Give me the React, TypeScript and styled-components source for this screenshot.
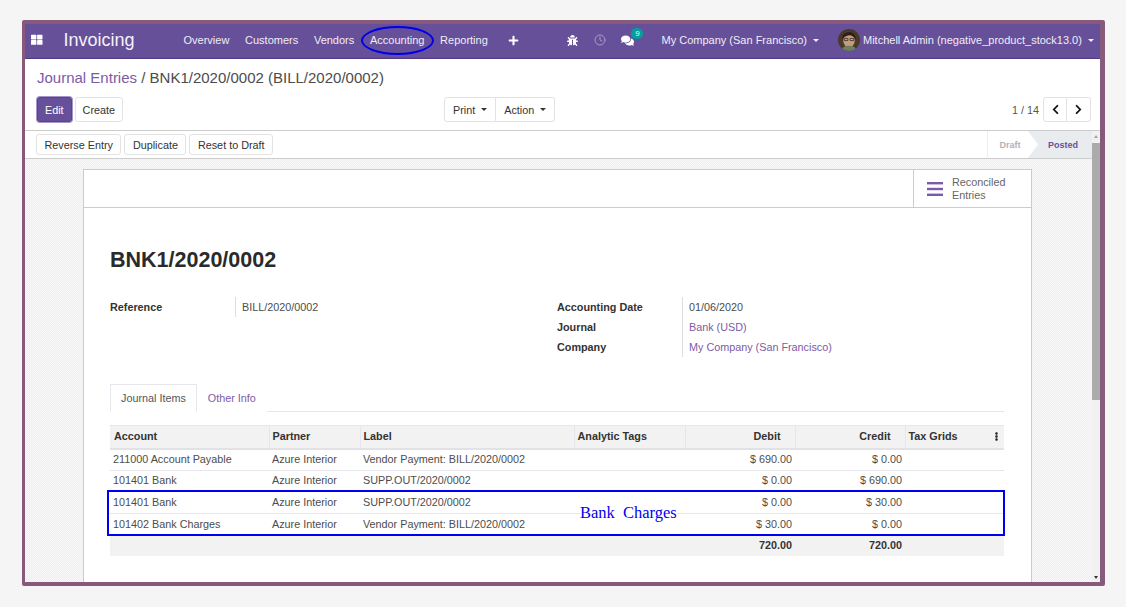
import React from 'react';
import styled, { createGlobalStyle } from 'styled-components';
import { FaBug, FaChevronLeft, FaChevronRight, FaComments, FaEllipsisV, FaPlus, FaThLarge } from 'react-icons/fa';
import { FiClock } from 'react-icons/fi';

const GlobalStyle = createGlobalStyle`
  html, body {
    margin: 0;
    padding: 0;
    height: 100%;
    background: #f5f5f5;
    overflow: hidden;
  }
  body {
    font-family: 'Liberation Sans', Arial, sans-serif;
    font-size: 10.8px;
    color: #4c4c4c;
  }
`;

const Page = styled.div`
  padding: 20px 21px 0 22px;
`;

const Frame = styled.div`
  width: 1083px;
  height: 566px;
  box-sizing: border-box;
  border: 3px solid #875a7b;
  border-top-width: 4px;
  border-right-width: 5px;
  border-bottom-width: 4px;
  border-radius: 2px;
  background: #fff;
  display: flex;
  flex-direction: column;
  overflow: hidden;
`;

const Navbar = styled.nav`
  height: 35px;
  flex: none;
  box-sizing: border-box;
  background: #67509a;
  border-bottom: 1px solid #4f3a86;
  display: flex;
  align-items: center;
  color: #fff;
  padding: 0 0 2px 6px;
  white-space: nowrap;
`;

const AppsIcon = styled.span`
  display: flex;
  font-size: 11.5px;
  color: #fff;
`;

const Brand = styled.div`
  font-size: 18px;
  margin-left: 21px;
  width: 120px;
  color: #f4f1f8;
`;

const MenuItem = styled.div`
  position: relative;
  font-size: 11px;
  margin-right: 15.7px;
  color: #f0edf5;
`;

const Ellipse = styled.span`
  position: absolute;
  left: -9px;
  right: -10px;
  top: -8px;
  bottom: -9px;
  border: 2px solid #0000e6;
  border-radius: 50%;
`;

const NavIcon = styled.span<{ $gap: number }>`
  position: relative;
  display: flex;
  font-size: 11px;
  margin-left: ${(p) => p.$gap}px;
  color: #fff;
`;

const MutedIcon = styled(NavIcon)`
  color: #a99bc7;
  font-size: 12px;
`;

const Badge = styled.span`
  position: absolute;
  left: 10px;
  top: -6px;
  width: 12px;
  height: 11px;
  border-radius: 6px;
  background: #00a09d;
  color: #dff;
  font-size: 8px;
  line-height: 11px;
  text-align: center;
`;

const CompanyMenu = styled.div`
  margin-left: 27px;
  font-size: 11px;
  color: #f0edf5;
  display: flex;
  align-items: center;
`;

const Caret = styled.span`
  display: inline-block;
  margin-left: 6px;
  border-left: 3.5px solid transparent;
  border-right: 3.5px solid transparent;
  border-top: 3.5px solid currentColor;
`;

const UserMenu = styled(CompanyMenu)`
  margin-left: 19px;
`;

const Avatar = styled.svg`
  width: 22px;
  height: 22px;
  margin-right: 3px;
  border-radius: 50%;
`;

const ControlPanel = styled.div`
  flex: none;
  height: 72px;
  box-sizing: border-box;
  padding: 9px 9px 0 12px;
  border-bottom: 1px solid #ccc;
`;

const Breadcrumb = styled.div`
  font-size: 15px;
  line-height: 20px;
  color: #4c4c4c;
  margin-bottom: 9px;
`;

const CrumbLink = styled.a`
  color: #7c5ba6;
`;

const ControlRow = styled.div`
  display: grid;
  grid-template-columns: 407px auto 1fr;
  align-items: center;
`;

const ButtonGroup = styled.div`
  display: flex;
  gap: 3px;
`;

const Button = styled.button`
  font: inherit;
  font-size: 10.8px;
  height: 25px;
  padding: 0 7px;
  background: #fff;
  color: #333;
  border: 1px solid #e3e3e3;
  border-radius: 3px;
  display: flex;
  align-items: center;
`;

const PrimaryButton = styled(Button)`
  background: #67509a;
  color: #fff;
  border-color: #5a4589;
  box-shadow: 0 0 0 1px #a595c8;
`;

const Joined = styled.div`
  display: flex;
`;

const JoinedButton = styled(Button)`
  border-radius: 0;
  padding: 0 8px;
  &:first-child {
    border-radius: 3px 0 0 3px;
  }
  &:not(:first-child) {
    border-left: none;
  }
  &:last-child {
    border-radius: 0 3px 3px 0;
  }
`;

const Pager = styled.div`
  display: flex;
  align-items: center;
  justify-content: flex-end;
  gap: 4px;
  color: #555;
`;

const PagerButton = styled(JoinedButton)`
  width: 24px;
  justify-content: center;
  padding: 0;
  color: #111;
  font-size: 11px;
`;

const Workspace = styled.div`
  flex: 1;
  min-height: 0;
  display: flex;
`;

const MainColumn = styled.div`
  flex: 1;
  min-width: 0;
  display: flex;
  flex-direction: column;
`;

const StatusBar = styled.div`
  flex: none;
  height: 28px;
  box-sizing: border-box;
  border-bottom: 1px solid #ccc;
  display: flex;
  align-items: center;
  justify-content: space-between;
  padding-left: 11px;
`;

const ActionButton = styled(Button)`
  height: 21px;
  padding: 0 7.5px;
`;

const Steps = styled.div`
  display: flex;
  align-self: stretch;
  border-left: 1px solid #eee;
`;

const Step = styled.div<{ $active?: boolean }>`
  display: flex;
  align-items: center;
  justify-content: center;
  font-size: 9px;
  font-weight: bold;
  color: ${(p) => (p.$active ? '#6a4f9c' : '#aeb4bb')};
  background: ${(p) => (p.$active ? '#e9ecef' : '#fff')};
  width: ${(p) => (p.$active ? '64px' : '40px')};
  padding-left: ${(p) => (p.$active ? '6px' : '4px')};
  box-sizing: border-box;
  clip-path: ${(p) => (p.$active ? 'polygon(0 0, 100% 0, 100% 100%, 0 100%, 10px 50%)' : 'none')};
`;

const SheetBg = styled.div`
  flex: 1;
  min-height: 0;
  padding: 10px 60px 0 58px;
  background-color: #f9f9f9;
  background-image: conic-gradient(#eeeeee 25%, transparent 0 50%, #eeeeee 0 75%, transparent 0);
  background-size: 2px 2px;
  overflow: hidden;
`;

const Sheet = styled.div`
  background: #fff;
  border: 1px solid #ccc;
  border-bottom: none;
  height: 100%;
  box-sizing: border-box;
`;

const ButtonBox = styled.div`
  height: 37px;
  border-bottom: 1px solid #ccc;
  display: flex;
  justify-content: flex-end;
`;

const StatButton = styled.div`
  width: 118px;
  box-sizing: border-box;
  border-left: 1px solid #ccc;
  display: flex;
  align-items: center;
  padding: 1px 0 0 13px;
  gap: 9px;
  color: #666;
  line-height: 13px;
`;

const BarsIcon = styled.svg`
  width: 16px;
  height: 14px;
  flex: none;
`;

const SheetBody = styled.div`
  padding: 39px 27px 0 26px;
`;

const Title = styled.h1`
  font-size: 21.5px;
  line-height: 26px;
  font-weight: bold;
  color: #2a2a2a;
  margin: 0 0 24px;
`;

const InfoGrid = styled.div`
  display: grid;
  grid-template-columns: 447px 1fr;
  height: 87px;
`;

const InfoGroup = styled.div`
  display: grid;
  grid-template-columns: 125px 1fr;
  grid-auto-rows: 20px;
  align-content: start;
`;

const InfoLabel = styled.div`
  font-weight: bold;
  color: #333;
  line-height: 20px;
`;

const InfoValue = styled.div`
  border-left: 1px solid #ddd;
  padding-left: 6px;
  line-height: 20px;
  color: #4c4c4c;
`;

const InfoLink = styled(InfoValue)`
  color: #7c5ba6;
`;

const Tabs = styled.div`
  display: flex;
  border-bottom: 1px solid #e6e6ec;
  height: 27px;
  margin-bottom: 13px;
`;

const Tab = styled.div<{ $active?: boolean }>`
  padding: 0 10px;
  line-height: 27px;
  margin-bottom: -1px;
  color: ${(p) => (p.$active ? '#555' : '#7c5ba6')};
  background: #fff;
  border: 1px solid ${(p) => (p.$active ? '#e6e6ec' : 'transparent')};
  border-bottom-color: ${(p) => (p.$active ? '#fff' : 'transparent')};
`;

const TableWrap = styled.div`
  position: relative;
`;

const Table = styled.table`
  width: 894px;
  table-layout: fixed;
  border-collapse: collapse;
  font-size: 10.8px;
`;

const HeadRow = styled.tr`
  background: #f2f2f2;
  height: 23px;
  border-top: 1px solid #e6e6ec;
  border-bottom: 2px solid #e2e2e6;
`;

const Th = styled.th<{ $right?: boolean }>`
  padding: 0 3px 1px;
  font-weight: bold;
  color: #333;
  text-align: ${(p) => (p.$right ? 'right' : 'left')};
  padding-right: ${(p) => (p.$right ? '14px' : '3px')};
  border-right: 1px solid #e6e6ec;
  &:first-child {
    padding-left: 4px;
  }
  &:last-child {
    border-right: none;
  }
`;

const TaxGridsHead = styled.div`
  display: flex;
  align-items: center;
  justify-content: space-between;
`;

const ColMenu = styled.span`
  display: flex;
  font-size: 9px;
  color: #222;
`;

const Row = styled.tr`
  height: 21.67px;
  border-bottom: 1px solid #e6e6ec;
`;

const Td = styled.td<{ $right?: boolean }>`
  padding: 0 3px 1px;
  text-align: ${(p) => (p.$right ? 'right' : 'left')};
  color: #4c4c4c;
`;

const FootRow = styled.tr`
  background: #f2f2f2;
  height: 21px;
`;

const FootTd = styled(Td)`
  font-weight: bold;
  color: #333;
`;

const Callout = styled.div`
  position: absolute;
  left: -3px;
  right: -1px;
  top: 65px;
  height: 46px;
  box-sizing: border-box;
  border: 2px solid #0000f0;
  pointer-events: none;
`;

const CalloutText = styled.span`
  position: absolute;
  left: 471px;
  top: 10.5px;
  font-family: 'Liberation Serif', 'Times New Roman', serif;
  font-size: 16.5px;
  line-height: 20px;
  word-spacing: 4px;
  color: #0000f0;
  background: #fff;
`;

const Scrollbar = styled.div`
  width: 8px;
  flex: none;
  background: #f1f1f1;
  display: flex;
  flex-direction: column;
  align-items: center;
`;

const ScrollArrow = styled.span<{ $down?: boolean }>`
  flex: none;
  margin: ${(p) => (p.$down ? '3px 0' : '4px 0 5px')};
  border-left: 2.5px solid transparent;
  border-right: 2.5px solid transparent;
  border-top: ${(p) => (p.$down ? '3px solid #333' : 'none')};
  border-bottom: ${(p) => (p.$down ? 'none' : '3px solid #a3a3a3')};
`;

const ScrollThumb = styled.div`
  width: 100%;
  height: 257px;
  background: #ababab;
  margin-bottom: auto;
`;

const menu = ['Overview', 'Customers', 'Vendors', 'Accounting', 'Reporting'];

const rows = [
  ['211000 Account Payable', 'Azure Interior', 'Vendor Payment: BILL/2020/0002', '$ 690.00', '$ 0.00'],
  ['101401 Bank', 'Azure Interior', 'SUPP.OUT/2020/0002', '$ 0.00', '$ 690.00'],
  ['101401 Bank', 'Azure Interior', 'SUPP.OUT/2020/0002', '$ 0.00', '$ 30.00'],
  ['101402 Bank Charges', 'Azure Interior', 'Vendor Payment: BILL/2020/0002', '$ 30.00', '$ 0.00'],
];

const App = () => (
  <Page>
    <GlobalStyle />
    <Frame>
      <Navbar>
        <AppsIcon>
          <FaThLarge />
        </AppsIcon>
        <Brand>Invoicing</Brand>
        {menu.map((item) => (
          <MenuItem key={item}>
            {item}
            {item === 'Accounting' && <Ellipse />}
          </MenuItem>
        ))}
        <NavIcon $gap={5}>
          <FaPlus />
        </NavIcon>
        <NavIcon $gap={48}>
          <FaBug />
        </NavIcon>
        <MutedIcon $gap={16}>
          <FiClock />
        </MutedIcon>
        <NavIcon $gap={15}>
          <FaComments style={{ fontSize: 13 }} />
          <Badge>9</Badge>
        </NavIcon>
        <CompanyMenu>
          My Company (San Francisco)
          <Caret />
        </CompanyMenu>
        <UserMenu>
          <Avatar viewBox="0 0 21 21">
            <rect width="21" height="21" fill="#4a3a2a" />
            <ellipse cx="10.5" cy="11" rx="5.5" ry="6.5" fill="#c79a78" />
            <path d="M4 10C4 4 8 3 11 3s6 2 6 7c-2-3-4-4-6-4S6 7 4 10z" fill="#2c1f18" />
            <path d="M6 9h3.5v2H6zM11.5 9H15v2h-3.5z" fill="none" stroke="#2c2c2c" strokeWidth="0.7" />
            <path d="M3 21c1-4 4-5 7.5-5s6.5 1 7.5 5z" fill="#6f7f66" />
          </Avatar>
          Mitchell Admin (negative_product_stock13.0)
          <Caret />
        </UserMenu>
      </Navbar>
      <ControlPanel>
        <Breadcrumb>
          <CrumbLink>Journal Entries</CrumbLink> / BNK1/2020/0002 (BILL/2020/0002)
        </Breadcrumb>
        <ControlRow>
          <ButtonGroup>
            <PrimaryButton>Edit</PrimaryButton>
            <Button>Create</Button>
          </ButtonGroup>
          <Joined>
            <JoinedButton>
              Print
              <Caret />
            </JoinedButton>
            <JoinedButton>
              Action
              <Caret />
            </JoinedButton>
          </Joined>
          <Pager>
            1 / 14
            <Joined>
              <PagerButton>
                <FaChevronLeft />
              </PagerButton>
              <PagerButton>
                <FaChevronRight />
              </PagerButton>
            </Joined>
          </Pager>
        </ControlRow>
      </ControlPanel>
      <Workspace>
        <MainColumn>
          <StatusBar>
            <ButtonGroup>
              <ActionButton>Reverse Entry</ActionButton>
              <ActionButton>Duplicate</ActionButton>
              <ActionButton>Reset to Draft</ActionButton>
            </ButtonGroup>
            <Steps>
              <Step>Draft</Step>
              <Step $active>Posted</Step>
            </Steps>
          </StatusBar>
          <SheetBg>
            <Sheet>
              <ButtonBox>
                <StatButton>
                  <BarsIcon viewBox="0 0 16 14">
                    <rect width="16" height="2.4" fill="#7c5ba6" />
                    <rect y="5.8" width="16" height="2.4" fill="#7c5ba6" />
                    <rect y="11.6" width="16" height="2.4" fill="#7c5ba6" />
                  </BarsIcon>
                  <span>
                    Reconciled
                    <br />
                    Entries
                  </span>
                </StatButton>
              </ButtonBox>
              <SheetBody>
                <Title>BNK1/2020/0002</Title>
                <InfoGrid>
                  <InfoGroup>
                    <InfoLabel>Reference</InfoLabel>
                    <InfoValue>BILL/2020/0002</InfoValue>
                  </InfoGroup>
                  <InfoGroup>
                    <InfoLabel>Accounting Date</InfoLabel>
                    <InfoValue>01/06/2020</InfoValue>
                    <InfoLabel>Journal</InfoLabel>
                    <InfoLink>Bank (USD)</InfoLink>
                    <InfoLabel>Company</InfoLabel>
                    <InfoLink>My Company (San Francisco)</InfoLink>
                  </InfoGroup>
                </InfoGrid>
                <Tabs>
                  <Tab $active>Journal Items</Tab>
                  <Tab>Other Info</Tab>
                </Tabs>
                <TableWrap>
                  <Table>
                    <colgroup>
                      <col width="159" />
                      <col width="91" />
                      <col width="214" />
                      <col width="111" />
                      <col width="110" />
                      <col width="110" />
                      <col width="99" />
                    </colgroup>
                    <thead>
                      <HeadRow>
                        <Th>Account</Th>
                        <Th>Partner</Th>
                        <Th>Label</Th>
                        <Th>Analytic Tags</Th>
                        <Th $right>Debit</Th>
                        <Th $right>Credit</Th>
                        <Th>
                          <TaxGridsHead>
                            Tax Grids
                            <ColMenu>
                              <FaEllipsisV />
                            </ColMenu>
                          </TaxGridsHead>
                        </Th>
                      </HeadRow>
                    </thead>
                    <tbody>
                      {rows.map((r, i) => (
                        <Row key={i}>
                          <Td>{r[0]}</Td>
                          <Td>{r[1]}</Td>
                          <Td>{r[2]}</Td>
                          <Td />
                          <Td $right>{r[3]}</Td>
                          <Td $right>{r[4]}</Td>
                          <Td />
                        </Row>
                      ))}
                    </tbody>
                    <tfoot>
                      <FootRow>
                        <Td />
                        <Td />
                        <Td />
                        <Td />
                        <FootTd $right>720.00</FootTd>
                        <FootTd $right>720.00</FootTd>
                        <Td />
                      </FootRow>
                    </tfoot>
                  </Table>
                  <Callout>
                    <CalloutText>Bank Charges</CalloutText>
                  </Callout>
                </TableWrap>
              </SheetBody>
            </Sheet>
          </SheetBg>
        </MainColumn>
        <Scrollbar>
          <ScrollArrow />
          <ScrollThumb />
          <ScrollArrow $down />
        </Scrollbar>
      </Workspace>
    </Frame>
  </Page>
);

export default App;
